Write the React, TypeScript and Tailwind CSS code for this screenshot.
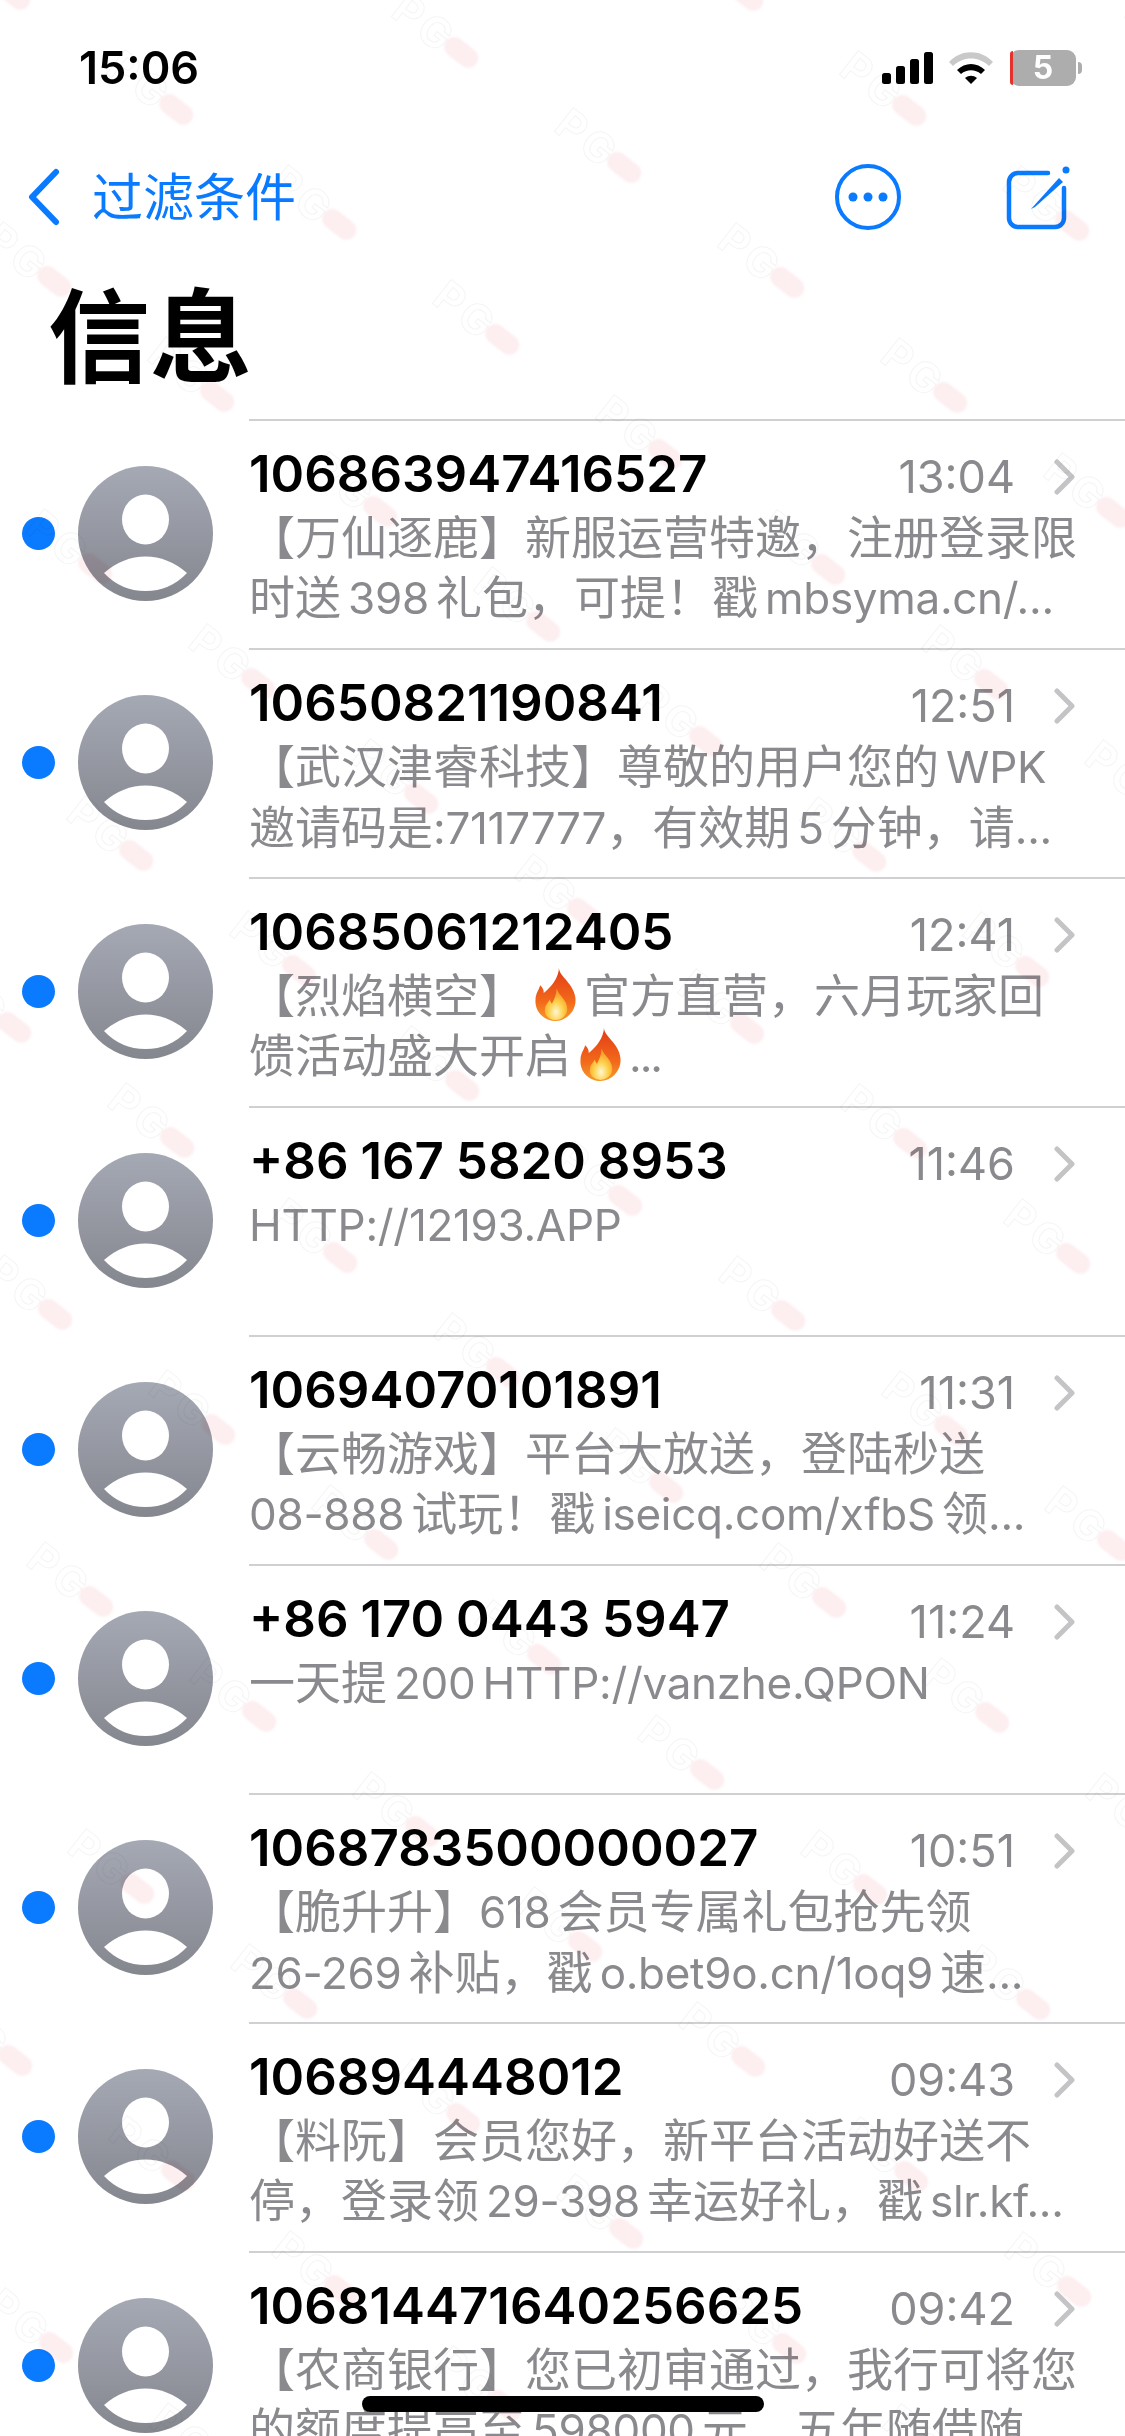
import React from "react";

interface Msg {
  sender: string;
  time: string;
  lines: React.ReactNode[];
}

// ascii runs sit tighter next to the CJK text, like the phone's own spacing
const Txt = ({ s }: { s: string }) => (
  <>
    {s.split(/([\x20-\x7e]+)/).map((part, i) =>
      i % 2 === 1 ? (
        <span key={i} className="text-[44px] tracking-[-0.3px] [word-spacing:-5px]">
          {part}
        </span>
      ) : (
        <span key={i}>{part}</span>
      )
    )}
  </>
);

const Fire = () => (
  <svg
    viewBox="0 0 40 50"
    preserveAspectRatio="none"
    className="inline-block w-[47px] h-[54px] align-[-9px]"
  >
    <defs>
      <linearGradient id="fire" x1="0" y1="0" x2="0" y2="1">
        <stop offset="0" stopColor="#e23a16" />
        <stop offset="0.65" stopColor="#f26a1b" />
        <stop offset="1" stopColor="#f79a2a" />
      </linearGradient>
      <radialGradient id="core" cx="0.5" cy="0.75" r="0.6">
        <stop offset="0" stopColor="#fff7d0" />
        <stop offset="0.55" stopColor="#fdd04a" />
        <stop offset="1" stopColor="#f9a02c" />
      </radialGradient>
    </defs>
    <path
      d="M23 0c-1 8 13 15 14 29 1 12-8 21-17 21S2 42 3 30c0-5 3-9 4-13 2 2 3 4 3 7 6-5 13-14 13-24z"
      fill="url(#fire)"
    />
    <path d="M21 20c1 6 9 10 9 19 0 6-5 10-10 10s-10-4-9-10c0-4 3-6 4-9 1 2 1 3 2 4 2-4 4-9 4-14z" fill="url(#core)" />
  </svg>
);

const messages: Msg[] = [
  {
    sender: "106863947416527",
    time: "13:04",
    lines: ["【万仙逐鹿】新服运营特邀，注册登录限", "时送 398 礼包，可提！戳 mbsyma.cn/..."],
  },
  {
    sender: "10650821190841",
    time: "12:51",
    lines: ["【武汉津睿科技】尊敬的用户您的 WPK", "邀请码是:7117777，有效期 5 分钟，请..."],
  },
  {
    sender: "10685061212405",
    time: "12:41",
    lines: [
      <>
        【烈焰横空】<span className="ml-[7px] mr-[5px]"><Fire /></span>官方直营，六月玩家回
      </>,
      <>
        馈活动盛大开启<span className="ml-[6px] mr-[5px]"><Fire /></span>
        <span className="text-[44px] tracking-[-2px]">...</span>
      </>,
    ],
  },
  { sender: "+86 167 5820 8953", time: "11:46", lines: ["HTTP://12193.APP"] },
  {
    sender: "10694070101891",
    time: "11:31",
    lines: ["【云畅游戏】平台大放送，登陆秒送", "08-888 试玩！戳 iseicq.com/xfbS 领..."],
  },
  { sender: "+86 170 0443 5947", time: "11:24", lines: ["一天提 200 HTTP://vanzhe.QPON"] },
  {
    sender: "1068783500000027",
    time: "10:51",
    lines: ["【脆升升】618 会员专属礼包抢先领", "26-269 补贴，戳 o.bet9o.cn/1oq9 速..."],
  },
  {
    sender: "106894448012",
    time: "09:43",
    lines: ["【料阮】会员您好，新平台活动好送不", "停，登录领 29-398 幸运好礼，戳 slr.kf..."],
  },
  {
    sender: "106814471640256625",
    time: "09:42",
    lines: ["【农商银行】您已初审通过，我行可将您", "的额度提高至 598000 元，五年随借随"],
  },
];

const Avatar = () => (
  <svg viewBox="0 0 135 135" className="w-[135px] h-[135px] shrink-0">
    <defs>
      <linearGradient id="avatar" x1="0" y1="0" x2="0" y2="1">
        <stop offset="0" stopColor="#a5a9b4" />
        <stop offset="1" stopColor="#85878f" />
      </linearGradient>
    </defs>
    <circle cx="67.5" cy="67.5" r="67.5" fill="url(#avatar)" />
    <ellipse cx="67.5" cy="53.5" rx="23.5" ry="25" fill="#fff" />
    <path d="M26 107 Q45 90.5 67.5 90.5 Q90 90.5 109 107 Q92 125 67.5 125 Q43 125 26 107Z" fill="#fff" />
  </svg>
);

const Row = ({ msg }: { msg: Msg }) => (
  <div className="flex h-[229px]">
    <div className="w-[22px] shrink-0" />
    <div className="w-[33px] shrink-0 flex items-center">
      <div className="w-[33px] h-[33px] rounded-full bg-[#0a7aff] mt-[-1px]" />
    </div>
    <div className="w-[23px] shrink-0" />
    <div className="shrink-0 flex items-center">
      <Avatar />
    </div>
    <div className="ml-[36px] flex-1 min-w-0 border-t-2 border-[#d0d0d2] pt-[22px] pr-[50px]">
      <div className="flex items-center h-[62px]">
        <div className="flex-1 text-[51px] font-semibold text-black whitespace-nowrap [word-spacing:-1px]">
          {msg.sender}
        </div>
        <div className="text-[45px] text-[#8a8a8e] mt-[6px]">{msg.time}</div>
        <svg viewBox="0 0 22 36" className="w-[22px] h-[36px] ml-[39px] mr-[-1px] mt-[5px]" fill="none">
          <path d="M3 3l15 15L3 33" stroke="#c4c4c7" strokeWidth="5" strokeLinecap="round" strokeLinejoin="round" />
        </svg>
      </div>
      <div className="text-[46px] leading-[60px] text-[#8a8a8e] whitespace-nowrap mt-[2px]">
        {msg.lines.map((l, i) => (
          <div key={i}>{typeof l === "string" ? <Txt s={l} /> : l}</div>
        ))}
      </div>
    </div>
  </div>
);

// faint "PG" watermark repeated over the whole screenshot on a slanted grid
const marks: { x: number; y: number }[] = [];
for (let a = -12; a <= 12; a++) {
  for (let b = -6; b <= 14; b++) {
    const x = 503 + 163 * a - 122 * b;
    const y = 340 + 115 * a + 172 * b;
    if (x > -40 && x < 1200 && y > -40 && y < 2480) marks.push({ x, y });
  }
}

const Watermarks = () => (
  <div className="absolute inset-0 pointer-events-none mix-blend-multiply" aria-hidden="true">
    {marks.map((m) => (
      <div
        key={`${m.x}-${m.y}`}
        className="absolute w-[130px] h-[40px] flex items-center justify-end rotate-[38deg] origin-[112px_20px]"
        style={{ left: m.x - 112, top: m.y - 20 }}
      >
        <span className="text-[42px] font-bold leading-none tracking-[4px] text-transparent [-webkit-text-stroke:1px_#f5f5f5] mr-[-6px]">
          PG
        </span>
        <div className="w-[38px] h-[20px] rounded-full bg-[#fdeef0] blur-[1px]" />
      </div>
    ))}
  </div>
);

export default function App() {
  return (
    <div className="relative w-[1125px] h-[2436px] overflow-hidden bg-white font-['Inter','Noto_Sans_CJK_SC',sans-serif]">
      <div className="flex items-center justify-between h-[70px] mt-[33px] pl-[79px] pr-[43px]">
        <div className="text-[45px] font-semibold text-black">15:06</div>
        <div className="flex items-center">
          <svg viewBox="0 0 51 32" className="w-[51px] h-[32px]">
            <rect x="0" y="21" width="9" height="11" rx="2.5" fill="#000" />
            <rect x="14" y="14" width="9" height="18" rx="2.5" fill="#000" />
            <rect x="28" y="7" width="9" height="25" rx="2.5" fill="#000" />
            <rect x="42" y="0" width="9" height="32" rx="2.5" fill="#000" />
          </svg>
          <svg viewBox="0 0 46 34" className="w-[46px] h-[34px] ml-[15px]">
            <path d="M1 11C13 -2 33 -2 45 11l-4 4C31 5 15 5 5 15z" fill="#c9c9c9" />
            <path d="M9 19c8-8 20-8 28 0l-4 4c-6-5-14-5-20 0z" fill="#000" />
            <path d="M17 27c4-3 8-3 12 0l-6 6z" fill="#000" />
          </svg>
          <div className="relative w-[66px] h-[36px] ml-[16px] rounded-[9px] bg-[#adadad] flex items-center justify-center">
            <div className="absolute left-0 top-[1px] bottom-[1px] w-[3px] rounded-l-[3px] bg-[#e5322d]" />
            <span className="text-[32px] font-bold text-white leading-none">5</span>
          </div>
          <div className="w-[4px] h-[12px] ml-[2px] rounded-r-full bg-[#adadad]" />
        </div>
      </div>

      <div className="flex items-center justify-between h-[66px] mt-[61px] pl-[27px] pr-[55px] text-[#0a7aff]">
        <div className="flex items-center">
          <svg viewBox="0 0 34 58" className="w-[34px] h-[58px]" fill="none">
            <path d="M29 4L5 29l24 25" stroke="#0a7aff" strokeWidth="6" strokeLinecap="round" strokeLinejoin="round" />
          </svg>
          <span className="ml-[31px] text-[51px] leading-none">过滤条件</span>
        </div>
        <div className="flex items-center">
          <svg viewBox="0 0 66 66" className="w-[66px] h-[66px]" fill="none">
            <circle cx="33" cy="33" r="31" stroke="#0a7aff" strokeWidth="4" />
            <circle cx="18" cy="33" r="4.5" fill="#0a7aff" />
            <circle cx="33" cy="33" r="4.5" fill="#0a7aff" />
            <circle cx="48" cy="33" r="4.5" fill="#0a7aff" />
          </svg>
          <svg viewBox="0 0 64 66" className="w-[64px] h-[66px] ml-[105px]" fill="none">
            <path
              d="M42 9H12a9 9 0 0 0-9 9v36a9 9 0 0 0 9 9h37a9 9 0 0 0 9-9V24"
              stroke="#0a7aff"
              strokeWidth="4.5"
              strokeLinecap="round"
            />
            <path d="M25 45l28-31 4 4-28 25z" fill="#0a7aff" />
            <circle cx="60" cy="6" r="3.5" fill="#0a7aff" />
          </svg>
        </div>
      </div>

      <div className="h-[110px] mt-[53px] pl-[48px] flex items-center text-[102px] font-bold text-black leading-none">
        信息
      </div>

      <div className="mt-[26px]">
        {messages.map((m) => (
          <Row key={m.sender} msg={m} />
        ))}
      </div>

      <Watermarks />

      <div className="absolute left-[362px] top-[2396px] w-[402px] h-[16px] rounded-full bg-black" />
    </div>
  );
}
